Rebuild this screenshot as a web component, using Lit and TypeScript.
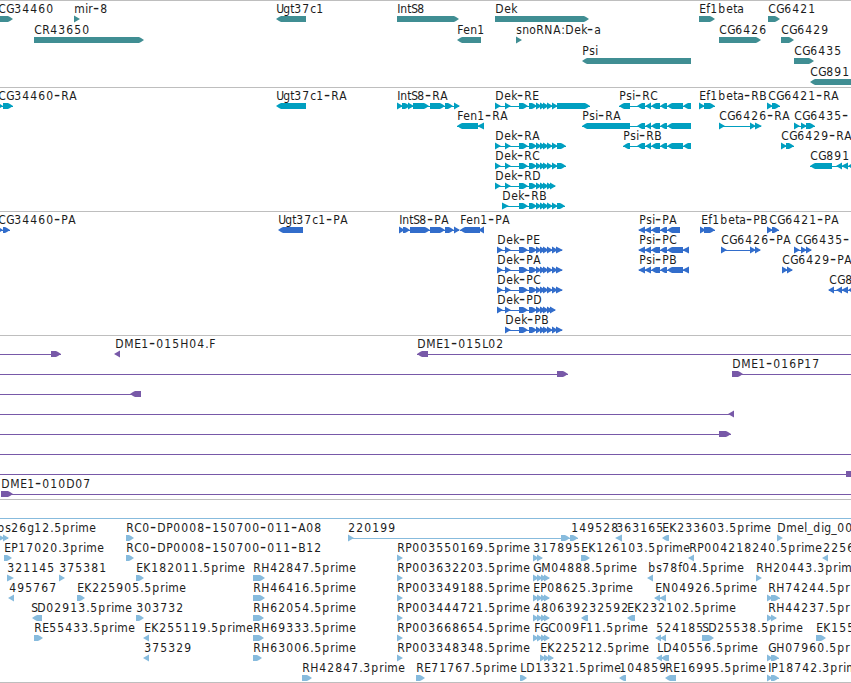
import { html, css, svg, LitElement } from 'lit';
import { customElement, property } from 'lit/decorators.js';

type Span = [number, number];

interface Feature {
    row: number;
    label: string;
    x: number;
    strand: 1 | -1;
    blocks: Span[];
    line?: Span;
}

const f = (row: number, label: string, strand: 1 | -1, blocks: Span[], line?: Span, x?: number): Feature => ({
    row,
    label,
    x: x ?? (blocks.length ? blocks[0][0] : 0),
    strand,
    blocks,
    line,
});

// Pixel advance of every character used in the labels, digits are 8
const ADVANCES: Record<string, number> = {
    A: 8, B: 8, C: 8, D: 9, E: 7, F: 6, G: 8, H: 9, I: 3, K: 8, L: 6, M: 10, N: 9, P: 7, R: 8, S: 6, U: 7,
    a: 7, b: 8, c: 6, d: 8, e: 7, f: 4, g: 7, i: 3, k: 6, l: 3, m: 11, n: 7, o: 7, p: 8, r: 5, s: 6, t: 4,
    '-': 7, '.': 4, ':': 4, _: 6,
};

const charPositions = (text: string, start: number) => {
    let x = start;
    return [...text].map((c) => {
        const at = c === '-' ? x : x + 0.3;
        x += ADVANCES[c] ?? 8;
        return at;
    }).join(' ');
};

const genes: Feature[] = [
    f(0, 'CG34460', 1, [[-10, 13]], undefined, -2),
    f(0, 'mir-8', 1, [[74, 79]]),
    f(0, 'Ugt37c1', -1, [[276, 306]]),
    f(0, 'IntS8', 1, [[397, 459]]),
    f(0, 'Dek', 1, [[495, 589]]),
    f(0, 'Ef1beta', 1, [[699, 715]]),
    f(0, 'CG6421', 1, [[768, 780]]),
    f(1, 'CR43650', 1, [[34, 144]]),
    f(1, 'Fen1', -1, [[457, 481]]),
    f(1, 'snoRNA:Dek-a', 1, [[516, 521]]),
    f(1, 'CG6426', 1, [[719, 761]]),
    f(1, 'CG6429', 1, [[781, 794]]),
    f(2, 'Psi', -1, [[582, 691]]),
    f(2, 'CG6435', 1, [[794, 814]]),
    f(3, 'CG891', -1, [[810, 870]]),
];

const dekStart: Span[] = [[495, 500], [505, 510]];
const dekMiddle: Span[] = [[519, 528], [529, 537], [537, 541], [541, 545], [544, 548], [548, 552]];
const psiMiddle: Span[] = [[637, 645], [646, 651], [651, 660], [660, 667]];

const transcripts: Feature[] = [
    f(0, 'CG34460-RA', 1, [[-4, 3], [3, 13]], undefined, -2),
    f(0, 'Ugt37c1-RA', -1, [[276, 306]]),
    f(0, 'IntS8-RA', 1, [[397, 402], [402, 410], [410, 413], [413, 429], [430, 445], [445, 453], [454, 459]]),
    f(0, 'Dek-RE', 1, [...dekStart, ...dekMiddle, [552, 557], [557, 590]]),
    f(0, 'Psi-RC', -1, [[619, 630], ...psiMiddle, [667, 683], [683, 691]]),
    f(0, 'Ef1beta-RB', 1, [[699, 704], [704, 715]]),
    f(0, 'CG6421-RA', 1, [[768, 772], [772, 780]]),
    f(1, 'Fen1-RA', -1, [[457, 478], [478, 484]]),
    f(1, 'Psi-RA', -1, [[582, 630], ...psiMiddle, [667, 691]]),
    f(1, 'CG6426-RA', 1, [[719, 724], [751, 755], [755, 761]]),
    f(1, 'CG6435-', 1, [[794, 799], [802, 806], [806, 815]]),
    f(2, 'Dek-RA', 1, [...dekStart, ...dekMiddle, [552, 557], [557, 566]]),
    f(2, 'Psi-RB', -1, [[623, 630], ...psiMiddle, [667, 683], [683, 691]]),
    f(2, 'CG6429-RA', 1, [[781, 786], [786, 794]]),
    f(3, 'Dek-RC', 1, [...dekStart, ...dekMiddle, [552, 557], [557, 566]]),
    f(3, 'CG891', -1, [[810, 832], [837, 842], [842, 848], [848, 856]]),
    f(4, 'Dek-RD', 1, [...dekStart, ...dekMiddle, [550, 555]]),
    f(5, 'Dek-RB', 1, [[502, 508], ...dekMiddle, [552, 557], [557, 565]]),
];

const dekCds: Span[] = [...dekMiddle, [552, 557], [556, 562]];
const psiCds: Span[] = [[639, 645], [645, 651], [651, 660], [660, 667]];

const proteins: Feature[] = [
    f(0, 'CG34460-PA', 1, [[-4, 3], [3, 10]], undefined, -2),
    f(0, 'Ugt37c1-PA', -1, [[278, 303]]),
    f(0, 'IntS8-PA', 1, [[399, 404], [403, 410], [410, 430], [430, 445], [445, 454], [454, 459]]),
    f(0, 'Fen1-PA', -1, [[460, 480], [479, 484]]),
    f(0, 'Psi-PA', -1, [...psiCds, [667, 680]]),
    f(0, 'Ef1beta-PB', 1, [[701, 705], [704, 715]]),
    f(0, 'CG6421-PA', 1, [[769, 772], [772, 779]]),
    f(1, 'Dek-PE', 1, [[497, 502], [505, 510], ...dekCds]),
    f(1, 'Psi-PC', -1, [...psiCds, [667, 683], [683, 689]]),
    f(1, 'CG6426-PA', 1, [[721, 726], [751, 755], [755, 760]]),
    f(1, 'CG6435-', 1, [[795, 799], [802, 806], [806, 811]]),
    f(2, 'Dek-PA', 1, [[497, 502], [505, 510], ...dekCds]),
    f(2, 'Psi-PB', -1, [...psiCds, [667, 683], [683, 689]]),
    f(2, 'CG6429-PA', 1, [[782, 787], [787, 792]]),
    f(3, 'Dek-PC', 1, [[497, 502], [505, 510], ...dekCds]),
    f(3, 'CG8', -1, [[829, 834], [837, 842], [842, 848], [848, 856]]),
    f(4, 'Dek-PD', 1, [[497, 502], [505, 510], ...dekMiddle, [550, 555]]),
    f(5, 'Dek-PB', 1, [[505, 510], ...dekCds]),
];

const clones: Feature[] = [
    f(0, '', 1, [[51, 61]], [0, 61]),
    f(0, 'DME1-015H04.F', -1, [[115, 120]]),
    f(0, 'DME1-015L02', -1, [[417, 428]], [417, 851]),
    f(1, '', 1, [[557, 568]], [0, 568]),
    f(1, 'DME1-016P17', 1, [[732, 743]], [732, 851]),
    f(2, '', -1, [[130, 141]], [0, 141]),
    f(3, '', -1, [[729, 734]], [0, 734]),
    f(4, '', 1, [[719, 731]], [0, 731]),
    f(5, '', 1, [], [0, 851]),
    f(6, '', 1, [[846, 860]], [0, 851]),
    f(7, 'DME1-010D07', 1, [[1, 13]], [1, 851]),
];

const fourHits: Span[] = [[533, 538], [537, 542], [541, 546], [545, 549]];

const ests: Feature[] = [
    f(0, '', 1, [], [0, 851]),
    f(1, 'bs26g12.5prime', 1, [[-2, 4], [3, 8]], undefined, -3),
    f(1, 'RC0-DP0008-150700-011-A08', 1, [[126, 134]]),
    f(1, '220199', 1, [[348, 353], [561, 570], [570, 578]]),
    f(1, '149528', 1, [], undefined, 571),
    f(1, '363165', -1, [[616, 622]]),
    f(1, 'EK233603.5prime', -1, [[662, 669]]),
    f(1, 'Dmel_dig_00', 1, [[777, 782]]),
    f(2, 'EP17020.3prime', 1, [[4, 12]]),
    f(2, 'RC0-DP0008-150700-011-B12', 1, [[126, 134]]),
    f(2, 'RP003550169.5prime', 1, [[397, 402]]),
    f(2, '317895', 1, [[533, 538], [537, 542]]),
    f(2, 'EK126103.5prime', 1, [[581, 590]]),
    f(2, 'RP004218240.5prime', -1, [[689, 694]]),
    f(2, '2256', -1, [[823, 828]]),
    f(3, '321145', 1, [[7, 13]]),
    f(3, '375381', 1, [[59, 64]]),
    f(3, 'EK182011.5prime', 1, [[136, 144]]),
    f(3, 'RH42847.5prime', 1, [[253, 265]]),
    f(3, 'RP003632203.5prime', 1, [[397, 402]]),
    f(3, 'GM04888.5prime', 1, fourHits),
    f(3, 'bs78f04.5prime', -1, [[648, 653]]),
    f(3, 'RH20443.3prime', 1, [[756, 761]]),
    f(4, '495767', -1, [[9, 14]]),
    f(4, 'EK225905.5prime', 1, [[77, 85]]),
    f(4, 'RH46416.5prime', 1, [[253, 265]]),
    f(4, 'RP003349188.5prime', 1, [[397, 402]]),
    f(4, 'EP08625.3prime', 1, fourHits),
    f(4, 'EN04926.5prime', -1, [[655, 660], [660, 666]]),
    f(4, 'RH74244.5pr', 1, [[768, 772], [771, 780]]),
    f(5, 'SD02913.5prime', -1, [[32, 42]], undefined, 31),
    f(5, '303732', 1, [[136, 144]]),
    f(5, 'RH62054.5prime', 1, [[253, 264]]),
    f(5, 'RP003444721.5prime', 1, [[397, 402]]),
    f(5, '480639', 1, fourHits),
    f(5, '232592', -1, [[581, 588]]),
    f(5, 'EK232102.5prime', -1, [[627, 635]]),
    f(5, 'RH44237.5pr', 1, [[768, 772], [771, 776]]),
    f(6, 'RE55433.5prime', 1, [[34, 43]]),
    f(6, 'EK255119.5prime', -1, [[144, 149]]),
    f(6, 'RH69333.5prime', 1, [[253, 264]]),
    f(6, 'RP003668654.5prime', 1, [[397, 402]]),
    f(6, 'FGC009F11.5prime', 1, [[534, 538], ...fourHits.slice(1)]),
    f(6, '524185', -1, [[656, 661], [661, 666]]),
    f(6, 'SD25538.5prime', 1, [[702, 714]]),
    f(6, 'EK155', 1, [[816, 826]]),
    f(7, '375329', -1, [[144, 149]]),
    f(7, 'RH63006.5prime', 1, [[253, 262]]),
    f(7, 'RP003348348.5prime', 1, [[397, 402]]),
    f(7, 'EK225212.5prime', 1, [[540, 545], [544, 549], [548, 553]]),
    f(7, 'LD40556.5prime', -1, [[657, 662], [661, 669]]),
    f(7, 'GH07960.5pr', 1, [[768, 772], [771, 779]]),
    f(8, 'RH42847.3prime', 1, [[302, 312]]),
    f(8, 'RE71767.5prime', 1, [[416, 425]]),
    f(8, 'LD13321.5prime', 1, [[520, 527]]),
    f(8, '104859', -1, [[619, 626]]),
    f(8, 'RE16995.5prime', -1, [[665, 676]]),
    f(8, 'IP18742.3prime', 1, [[768, 772], [771, 779]]),
];

@customElement('genome-track')
export class GenomeTrack extends LitElement {
    static styles = css`
      :host {
        display: block;
        box-sizing: border-box;
        border-top: 1px solid #bebebe;
        overflow: hidden;
      }

      svg {
        display: block;
        width: 100%;
        height: 100%;
      }

      text {
        font-family: "DejaVu Sans Condensed", "DejaVu Sans", sans-serif;
        font-stretch: condensed;
        font-size: 12px;
        fill: #1c1c1c;
      }

      .dash {
        font-family: "DejaVu Sans", sans-serif;
        font-stretch: normal;
        font-size: 17px;
      }

      .glyph {
        fill: var(--track-color);
      }
    `;

    @property({ attribute: false })
    features: Feature[] = [];

    @property({ type: Number })
    pitch = 20;

    private arrow([start, end]: Span, strand: number, top: number) {
        const length = end - start;
        const tip = strand > 0 ? end : start;
        const tail = strand > 0 ? start : end;
        // Short blocks are plain triangles, at least 6px deep so that neighbours merge
        const points = length < 7
            ? [
                [strand > 0 ? Math.min(tail, tip - 5) : Math.max(tail, tip + 5), top - 0.5],
                [tip + strand, top + 3],
                [strand > 0 ? Math.min(tail, tip - 5) : Math.max(tail, tip + 5), top + 6.5],
            ]
            : [
                [tail, top],
                [tip - strand * 5, top],
                [tip - strand * 3, top + 1],
                [tip, top + 3],
                [tip - strand * 3, top + 5],
                [tip - strand * 5, top + 6],
                [tail, top + 6],
            ];
        return svg`<polygon class="glyph" points=${points.map((p) => p.join(',')).join(' ')} />`;
    }

    private label(item: Feature, y: number) {
        const parts = item.label.split(/(-)/);
        return svg`<text x=${charPositions(item.label, item.x)} y=${y}>${parts.map((part) =>
            part === '-' ? svg`<tspan class="dash">-</tspan>` : part)}</text>`;
    }

    private feature(item: Feature) {
        const top = item.row * this.pitch + 15;
        const { blocks } = item;
        const line = item.line ?? (blocks.length > 1 ? [blocks[0][0], blocks[blocks.length - 1][1]] : null);
        return svg`
            ${line ? svg`<rect class="glyph" x=${line[0]} y=${top + 3} width=${line[1] - line[0]} height="1" />` : null}
            ${blocks.map((block) => this.arrow(block, item.strand, top))}
            ${item.label ? this.label(item, top - 3) : null}
        `;
    }

    protected render() {
        return html`<svg>${this.features.map((item) => this.feature(item))}</svg>`;
    }
}

@customElement('app-root')
export class AppRoot extends LitElement {
    static styles = css`
      :host {
        display: grid;
        grid-template-rows: 87px 124px 124px 164px 183px;
        height: 683px;
        box-sizing: border-box;
        border-bottom: 1px solid #bebebe;
        background: #fff;
        overflow: hidden;
      }

      .genes {
        --track-color: #408e93;
      }

      .transcripts {
        --track-color: #009fc0;
      }

      .proteins {
        --track-color: #326dcb;
      }

      .clones {
        --track-color: #7859a8;
      }

      .ests {
        --track-color: #87bbdd;
      }
    `;

    protected render() {
        return html`
            <genome-track class="genes" pitch="21" .features=${genes}></genome-track>
            <genome-track class="transcripts" .features=${transcripts}></genome-track>
            <genome-track class="proteins" .features=${proteins}></genome-track>
            <genome-track class="clones" .features=${clones}></genome-track>
            <genome-track class="ests" .features=${ests}></genome-track>
        `;
    }
}
